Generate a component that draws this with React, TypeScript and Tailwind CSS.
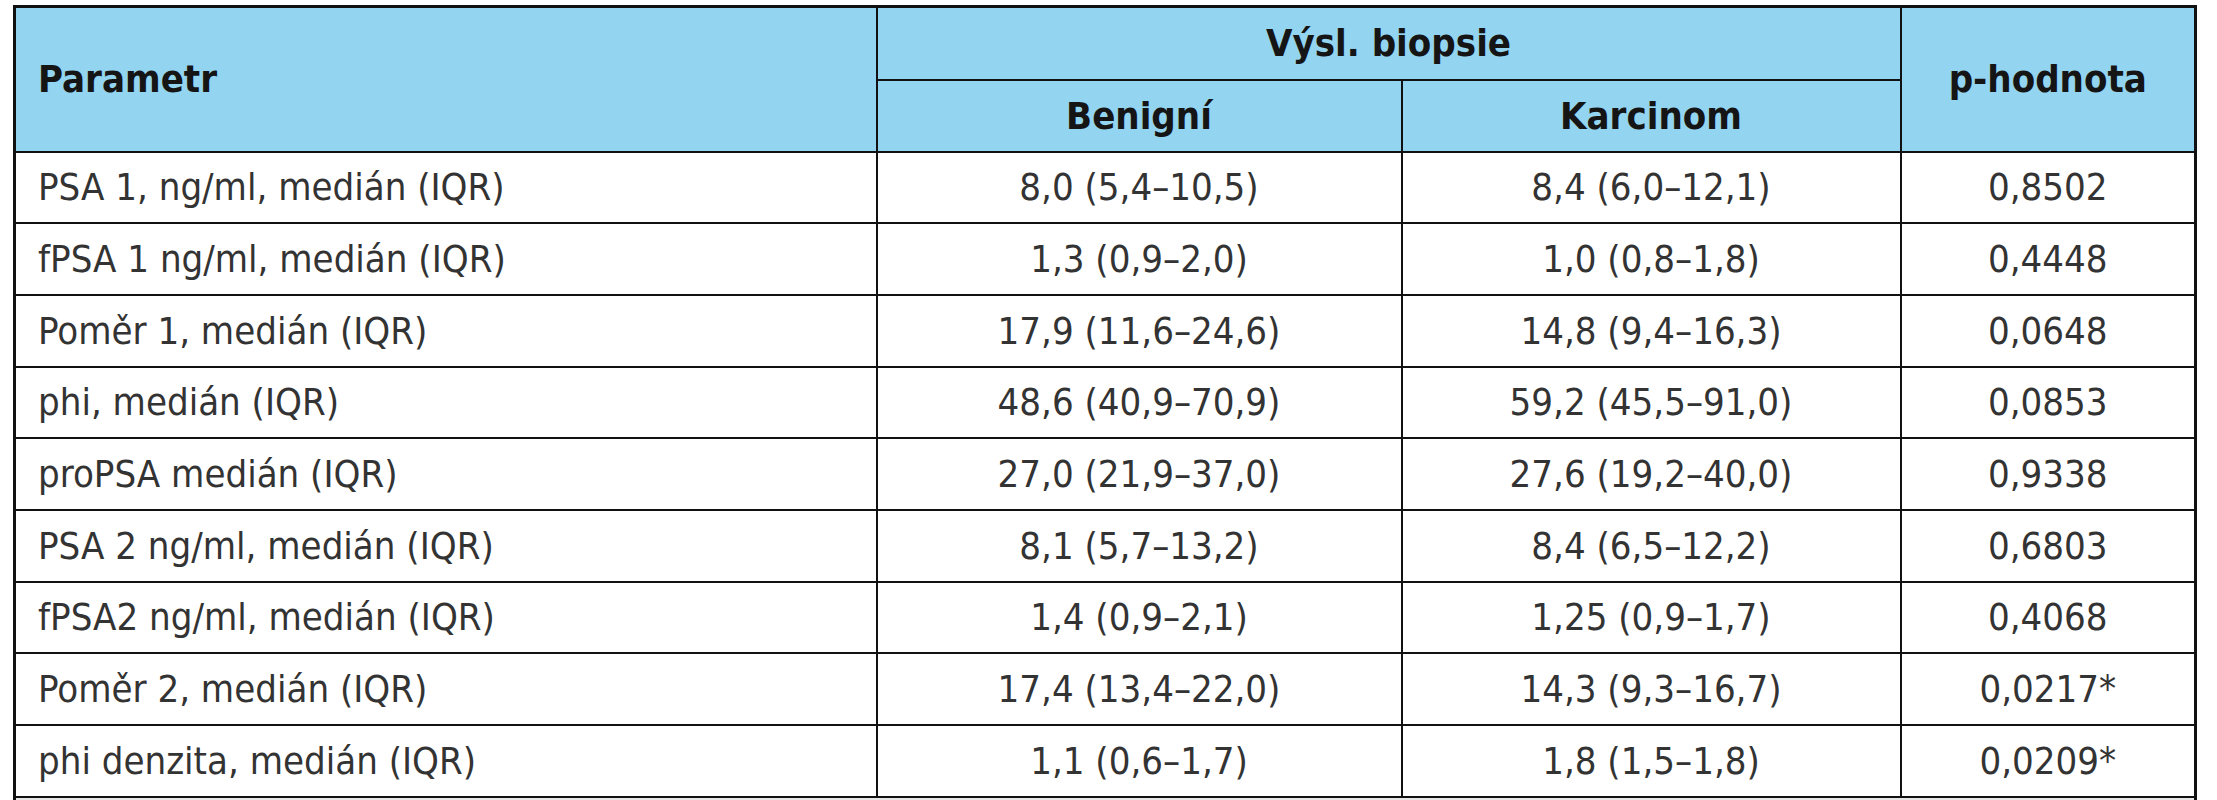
const rows: [string, string, string, string][] = [
  ["PSA 1, ng/ml, medián (IQR)", "8,0 (5,4–10,5)", "8,4 (6,0–12,1)", "0,8502"],
  ["fPSA 1 ng/ml, medián (IQR)", "1,3 (0,9–2,0)", "1,0 (0,8–1,8)", "0,4448"],
  ["Poměr 1, medián (IQR)", "17,9 (11,6–24,6)", "14,8 (9,4–16,3)", "0,0648"],
  ["phi, medián (IQR)", "48,6 (40,9–70,9)", "59,2 (45,5–91,0)", "0,0853"],
  ["proPSA medián (IQR)", "27,0 (21,9–37,0)", "27,6 (19,2–40,0)", "0,9338"],
  ["PSA 2 ng/ml, medián (IQR)", "8,1 (5,7–13,2)", "8,4 (6,5–12,2)", "0,6803"],
  ["fPSA2 ng/ml, medián (IQR)", "1,4 (0,9–2,1)", "1,25 (0,9–1,7)", "0,4068"],
  ["Poměr 2, medián (IQR)", "17,4 (13,4–22,0)", "14,3 (9,3–16,7)", "0,0217*"],
  ["phi denzita, medián (IQR)", "1,1 (0,6–1,7)", "1,8 (1,5–1,8)", "0,0209*"],
]

export default function App() {
  return (
    <div className="w-[2217px] h-[800px] overflow-hidden bg-white pt-[5px] pl-[13px] font-['Liberation_Sans_Narrow','DejaVu_Sans_Condensed',Lato,sans-serif] text-[38px] leading-none">
      <table className="w-[2181px] table-fixed border-collapse border-[3px] border-[#111]">
        <colgroup>
          <col className="w-[862px]" />
          <col className="w-[525px]" />
          <col className="w-[499px]" />
          <col className="w-[295px]" />
        </colgroup>
        <thead className="bg-[#93d4f0] text-[#151515] font-bold">
          <tr className="h-[73px]">
            <th rowSpan={2} className="border-2 border-[#111] text-left pl-[22px] font-bold">
              Parametr
            </th>
            <th colSpan={2} className="border-2 border-[#111] text-center font-bold">
              Výsl. biopsie
            </th>
            <th rowSpan={2} className="border-2 border-[#111] text-center font-bold">
              p-hodnota
            </th>
          </tr>
          <tr className="h-[72px]">
            <th className="border-2 border-[#111] text-center font-bold">Benigní</th>
            <th className="border-2 border-[#111] text-center font-bold">Karcinom</th>
          </tr>
        </thead>
        <tbody className="text-[#333]">
          {rows.map((r) => (
            <tr key={r[0]} className="h-[71.7px]">
              <td className="border-2 border-[#111] pl-[22px] text-left">{r[0]}</td>
              <td className="border-2 border-[#111] text-center">{r[1]}</td>
              <td className="border-2 border-[#111] text-center">{r[2]}</td>
              <td className="border-2 border-[#111] text-center">{r[3]}</td>
            </tr>
          ))}
          <tr className="h-[40px] bg-[#e6e6e6]">
            <td colSpan={4} className="border-2 border-[#111]"></td>
          </tr>
        </tbody>
      </table>
    </div>
  )
}
